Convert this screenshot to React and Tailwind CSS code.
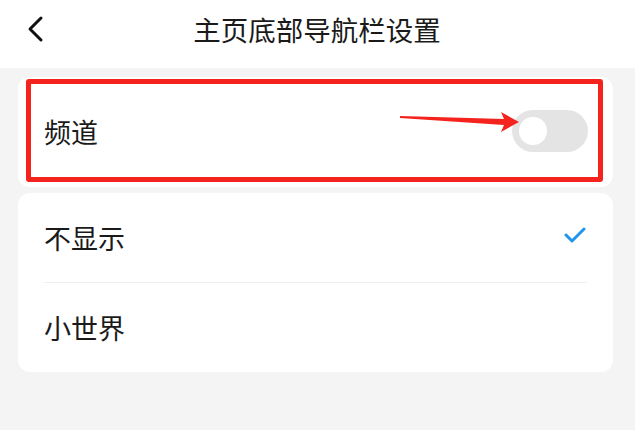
import React from 'react';

const font = { fontFamily: '"Noto Sans CJK SC", "Noto Sans", sans-serif' };

const App = () => {
    return (
        <div className="w-[635px] h-[430px] bg-[#f4f4f4] overflow-hidden relative" style={font}>
            {/* header */}
            <div className="h-[68px] bg-white flex items-center relative">
                <button className="absolute left-[22px] top-[14px] w-[26px] h-[30px] flex items-center justify-center">
                    <svg width="18" height="28" viewBox="0 0 18 28" fill="none">
                        <path d="M15 3 L4 14 L15 25" stroke="#111" strokeWidth="3" strokeLinecap="round" strokeLinejoin="round" />
                    </svg>
                </button>
                <h1 className="w-full text-center text-[27.5px] leading-none text-[#1a1a1a] -mt-[9px] pr-[1px]">主页底部导航栏设置</h1>
            </div>

            {/* channel toggle card */}
            <div className="ml-[18px] mr-[22px] mt-[9px] h-[110px] bg-white rounded-[12px] relative flex items-center justify-between pl-[26px] pr-[25px]">
                <span className="text-[27px] text-[#1a1a1a] leading-none -mt-[2px]">频道</span>
                <div className="w-[76px] h-[42px] rounded-full bg-[#e4e4e4] flex items-center pl-[7px] -mt-[2px]">
                    <div className="w-[28px] h-[28px] rounded-full bg-white"></div>
                </div>
                <div className="absolute left-[8px] right-[10px] top-[2px] bottom-[5px] border-[5px] border-[#f5231d] rounded-[3px] pointer-events-none"></div>
                <svg className="absolute left-[380px] top-[34px] pointer-events-none" width="130" height="26" viewBox="0 0 130 26">
                    <polygon points="2,5 106,8 103,1 121,11 103,21 106,14 2,7" fill="#f5231d" />
                </svg>
            </div>

            {/* option list */}
            <div className="ml-[18px] mr-[22px] mt-[6px] bg-white rounded-[12px] px-[26px]">
                <div className="h-[90px] flex items-center justify-between border-b border-[#efefef]">
                    <span className="text-[27px] text-[#1a1a1a] leading-none">不显示</span>
                    <svg width="22" height="16" viewBox="0 0 22 16" fill="none" className="mr-[1px] -mt-[6px]">
                        <path d="M2 8 L8 14 L20 2" stroke="#1f95ec" strokeWidth="3" strokeLinecap="round" strokeLinejoin="round" />
                    </svg>
                </div>
                <div className="h-[89px] flex items-center">
                    <span className="text-[27px] text-[#1a1a1a] leading-none">小世界</span>
                </div>
            </div>
        </div>
    );
};

export default App;
